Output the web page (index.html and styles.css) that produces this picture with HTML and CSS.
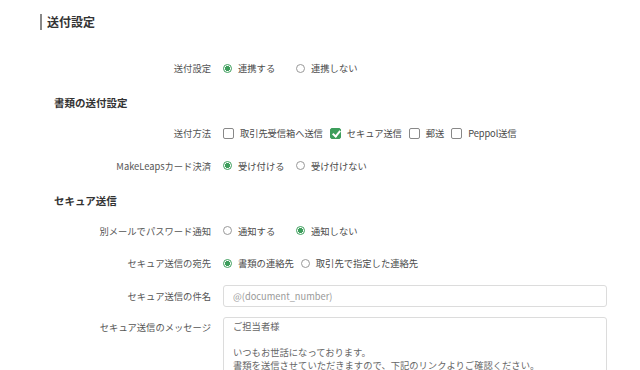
FILE: index.html
```html
<!DOCTYPE html>
<html lang="ja">
<head>
    <meta charset="UTF-8" />
    <meta name="viewport" content="width=device-width, initial-scale=1.0" />
    <title>送付設定</title>
    <link rel="stylesheet" href="styles.css">
</head>
<body>
    <div class="page">
        <h1 class="page-title">送付設定</h1>

        <div class="section">
            <div class="row">
                <div class="label">送付設定</div>
                <div class="controls">
                    <label class="option"><input type="radio" name="link" checked /> 連携する</label>
                    <label class="option"><input type="radio" name="link" /> 連携しない</label>
                </div>
            </div>
        </div>

        <div class="section">
            <h2 class="section-title">書類の送付設定</h2>
            <div class="row">
                <div class="label">送付方法</div>
                <div class="controls">
                    <label class="check"><input type="checkbox" /> 取引先受信箱へ送信</label>
                    <label class="check"><input type="checkbox" checked /> セキュア送信</label>
                    <label class="check"><input type="checkbox" /> 郵送</label>
                    <label class="check"><input type="checkbox" /> Peppol送信</label>
                </div>
            </div>
            <div class="row">
                <div class="label">MakeLeapsカード決済</div>
                <div class="controls">
                    <label class="option"><input type="radio" name="card" checked /> 受け付ける</label>
                    <label class="option"><input type="radio" name="card" /> 受け付けない</label>
                </div>
            </div>
        </div>

        <div class="section">
            <h2 class="section-title">セキュア送信</h2>
            <div class="row">
                <div class="label">別メールでパスワード通知</div>
                <div class="controls">
                    <label class="option"><input type="radio" name="notify" /> 通知する</label>
                    <label class="option"><input type="radio" name="notify" checked /> 通知しない</label>
                </div>
            </div>
            <div class="row">
                <div class="label">セキュア送信の宛先</div>
                <div class="controls">
                    <label class="option"><input type="radio" name="dest" checked /> 書類の連絡先</label>
                    <label class="option"><input type="radio" name="dest" /> 取引先で指定した連絡先</label>
                </div>
            </div>
            <div class="row">
                <div class="label">セキュア送信の件名</div>
                <div class="controls">
                    <input type="text" class="text-field" placeholder="@(document_number)" />
                </div>
            </div>
            <div class="row row-top">
                <div class="label">セキュア送信のメッセージ</div>
                <div class="controls">
                    <textarea class="text-area">ご担当者様

いつもお世話になっております。
書類を送信させていただきますので、下記のリンクよりご確認ください。</textarea>
                </div>
            </div>
        </div>
    </div>
</body>
</html>
```

FILE: styles.css
```css
body {
    margin: 0;
    background-color: #ffffff;
    font-family: "Noto Sans CJK JP", "Noto Sans", sans-serif;
    color: #444;
}

.page {
    padding: 14px 33px 0 40px;
}

.page-title {
    margin: 0 0 27px 0;
    height: 16px;
    line-height: 16px;
    font-size: 12px;
    font-weight: bold;
    color: #333;
    border-left: 2px solid #888;
    padding-left: 5px;
}

.section {
    padding-left: 14px;
}

.section-title {
    margin: 13px 0 8px 0;
    height: 22px;
    line-height: 22px;
    font-size: 10.5px;
    font-weight: bold;
    color: #333;
}

.row {
    display: flex;
    align-items: center;
    min-height: 22px;
    margin-bottom: 10.5px;
}

.row-top {
    align-items: flex-start;
}

.row-top .label {
    padding-top: 3px;
}

.label {
    width: 157px;
    flex-shrink: 0;
    padding-right: 12px;
    text-align: right;
    font-size: 9.3px;
    color: #555;
}

.controls {
    flex: 1;
    display: flex;
    align-items: center;
    font-size: 9.3px;
    color: #4a4a4a;
}

.option,
.check {
    display: flex;
    align-items: center;
    gap: 6px;
    white-space: nowrap;
}

.option {
    min-width: 66px;
    margin-right: 7px;
}

.check {
    margin-right: 7px;
    letter-spacing: -0.1px;
}

input[type="radio"] {
    appearance: none;
    margin: 0;
    width: 9px;
    height: 9px;
    border: 1px solid #999;
    border-radius: 50%;
    background: #fff;
    box-sizing: border-box;
}

input[type="radio"]:checked {
    border-color: #3d9e5c;
    background: radial-gradient(circle, #3d9e5c 0 2.3px, #ffffff 2.8px);
}

input[type="checkbox"] {
    appearance: none;
    margin: 0;
    width: 11px;
    height: 11px;
    border: 1px solid #888;
    border-radius: 2px;
    background: #fff;
    box-sizing: border-box;
    position: relative;
}

input[type="checkbox"]:checked {
    border-color: #3d9e5c;
    background: #3d9e5c;
}

input[type="checkbox"]:checked::after {
    content: "";
    position: absolute;
    left: 3px;
    top: 0px;
    width: 3px;
    height: 6px;
    border-right: 2px solid #fff;
    border-bottom: 2px solid #fff;
    transform: rotate(40deg);
}

.text-field {
    width: 100%;
    height: 22px;
    box-sizing: border-box;
    border: 1px solid #dcdcdc;
    border-radius: 3px;
    padding: 0 9px;
    font-family: "Noto Sans CJK JP", "Noto Sans", sans-serif;
    font-size: 9.3px;
    color: #444;
}

.text-field::placeholder {
    color: #999;
}

.text-area {
    width: 100%;
    height: 100px;
    box-sizing: border-box;
    border: 1px solid #dcdcdc;
    border-radius: 3px;
    padding: 2px 9px;
    font-family: "Noto Sans CJK JP", "Noto Sans", sans-serif;
    font-size: 9.3px;
    line-height: 13px;
    color: #666;
    resize: none;
}
```
